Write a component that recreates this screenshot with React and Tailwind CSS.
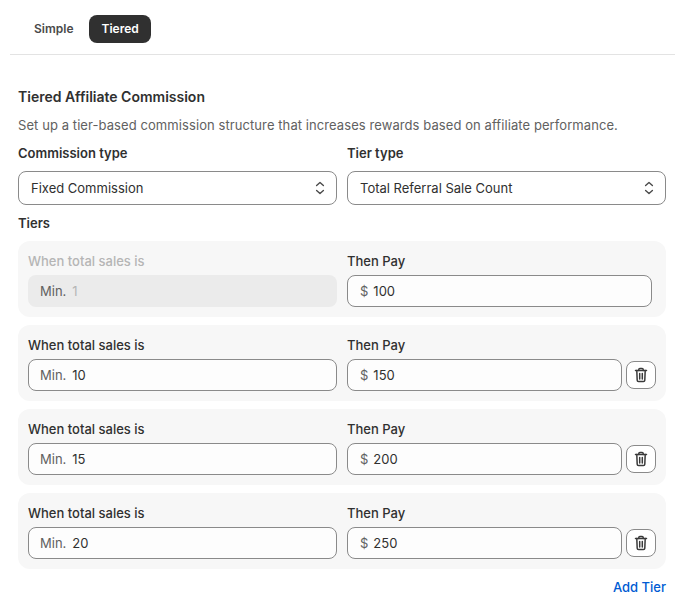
const tiers = [
  { min: '10', pay: '150' },
  { min: '15', pay: '200' },
  { min: '20', pay: '250' },
]

function Chevrons() {
  return (
    <svg width="16" height="16" viewBox="0 0 16 16" fill="none" stroke="#4a4a4a" strokeWidth="1.4" strokeLinecap="round" strokeLinejoin="round">
      <path d="M4.6 5.6 8 2.6 11.4 5.6" />
      <path d="M4.6 10.4 8 13.4 11.4 10.4" />
    </svg>
  )
}

function Trash() {
  return (
    <svg width="16" height="16" viewBox="0 0 16 16" fill="none" stroke="#3a3a3a" strokeWidth="1.5" strokeLinecap="round" strokeLinejoin="round">
      <path d="M2.5 3.5h11" />
      <path d="M5.8 3.5V2.6c0-.6.5-1.1 1.1-1.1h2.2c.6 0 1.1.5 1.1 1.1v.9" />
      <path d="M3.8 3.5l.4 9.7c0 .8.6 1.3 1.4 1.3h4.8c.8 0 1.4-.5 1.4-1.3l.4-9.7" />
      <path d="M6.7 6.5v5.5M9.3 6.5v5.5" />
    </svg>
  )
}

function Select({ label, value }) {
  return (
    <div className="flex flex-col gap-2">
      <div className="pt-px text-[13px] leading-5 font-semibold text-[#303030]">{label}</div>
      <div className="flex h-[34px] items-center justify-between rounded-lg border border-[#8a8a8a] bg-white pr-[8px] pl-3 text-[13px] text-[#303030]">
        <span className="pt-px">{value}</span>
        <Chevrons />
      </div>
    </div>
  )
}

function TierRow({ min, pay, disabled, removable }) {
  return (
    <div className="grid grid-cols-2 gap-[10px] rounded-xl bg-[#f7f7f7] p-[10px]">
      <div className="flex flex-col gap-1">
        <div className={disabled ? 'text-[13px] leading-[20px] font-[450] text-[#b5b5b5]' : 'text-[13px] leading-[20px] font-[450] text-[#303030]'}>
          When total sales is
        </div>
        <div className={disabled ? 'flex h-8 items-center gap-[6px] rounded-lg bg-[#ebebeb] px-3 text-[13px]' : 'flex h-8 items-center gap-[6px] rounded-lg border border-[#8a8a8a] bg-[#fdfdfd] px-[11px] text-[13px]'}>
          <span className="pt-px text-[#616161]">Min.</span>
          <span className={disabled ? 'pt-px text-[#b5b5b5]' : 'pt-px text-[#303030]'}>{min}</span>
        </div>
      </div>
      <div className="flex flex-col gap-1">
        <div className="text-[13px] leading-[20px] font-[450] text-[#303030]">Then Pay</div>
        <div className={removable ? 'flex items-center gap-1' : 'mr-1 flex items-center gap-1'}>
          <div className="flex h-8 flex-1 items-center gap-[5px] rounded-lg border border-[#8a8a8a] bg-[#fdfdfd] px-3 text-[13px]">
            <span className="pt-px text-[#616161]">$</span>
            <span className="pt-px text-[#303030]">{pay}</span>
          </div>
          {removable && (
            <button className="flex h-7 w-[30px] items-center justify-center rounded-lg border border-[#8a8a8a] bg-white">
              <Trash />
            </button>
          )}
        </div>
      </div>
    </div>
  )
}

export default function App() {
  return (
    <div className="min-h-[605px] bg-white px-[10px] font-['Inter',sans-serif]">
      <div className="flex h-[55px] items-start gap-1 border-b border-[#e3e3e3] px-3 pt-[15px]">
        <button className="flex h-7 items-center rounded-lg px-3 text-xs font-semibold text-[#4a4a4a]">Simple</button>
        <button className="flex h-7 items-center rounded-lg bg-[#303030] px-3 text-xs font-semibold text-white">Tiered</button>
      </div>
      <div className="pt-[32px] pr-[9px] pl-2">
        <h2 className="text-sm leading-5 font-semibold text-[#303030]">Tiered Affiliate Commission</h2>
        <p className="mt-[8px] text-[13px] leading-5 tracking-[0.08px] text-[#616161]">
          Set up a tier-based commission structure that increases rewards based on affiliate performance.
        </p>
        <div className="mt-[7px] grid grid-cols-2 gap-[10px]">
          <Select label="Commission type" value="Fixed Commission" />
          <Select label="Tier type" value="Total Referral Sale Count" />
        </div>
        <div className="mt-2 text-[13px] leading-5 font-semibold text-[#303030]">Tiers</div>
        <div className="mt-2 flex flex-col gap-2">
          <TierRow min="1" pay="100" disabled />
          {tiers.map((t) => (
            <TierRow key={t.min} min={t.min} pay={t.pay} removable />
          ))}
        </div>
        <div className="mt-2 text-right text-[13px] leading-5 font-[450] text-[#005bd3]">Add Tier</div>
      </div>
    </div>
  )
}
